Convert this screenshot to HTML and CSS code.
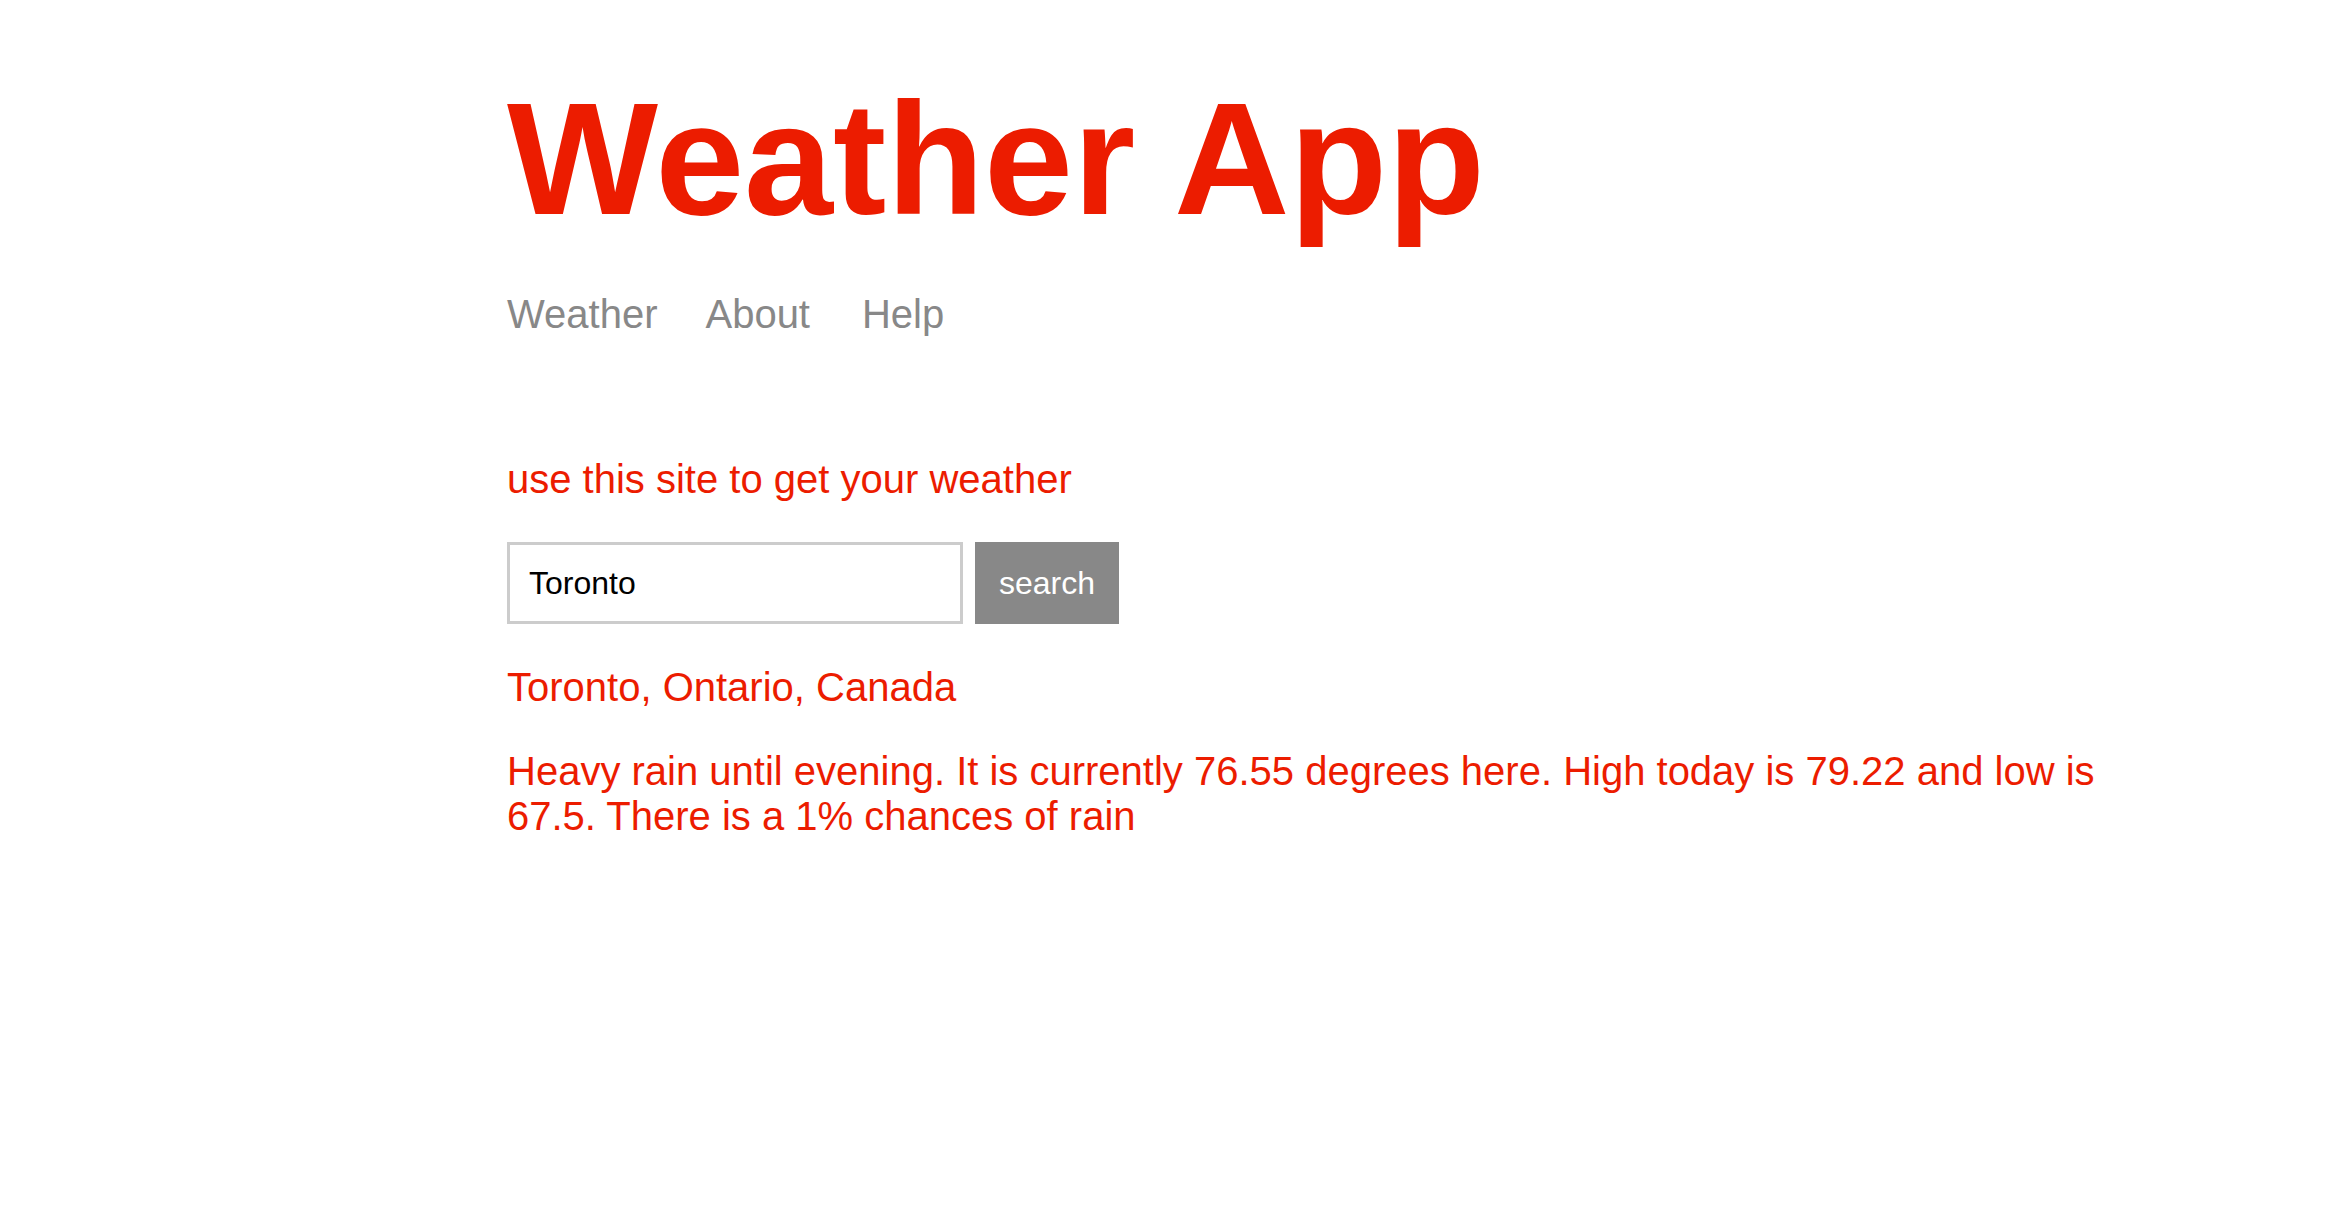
FILE: index.html
```html
<!DOCTYPE html>
<html lang="en">
<head>
<meta charset="utf-8">
<title>Weather App</title>
<link rel="stylesheet" href="styles.css">
</head>
<body>
<div class="page">
  <header class="header">
    <h1 class="title">Weather App</h1>
    <nav class="nav">
      <a class="nav-link" href="#">Weather</a>
      <a class="nav-link" href="#">About</a>
      <a class="nav-link nav-link-last" href="#">Help</a>
    </nav>
  </header>
  <main class="main">
    <p class="intro">use this site to get your weather</p>
    <form class="search-form">
      <input class="search-input" type="text" value="Toronto">
      <button class="search-button" type="button">search</button>
    </form>
    <p class="location">Toronto, Ontario, Canada</p>
    <p class="forecast">Heavy rain until evening. It is currently 76.55 degrees here. High today is 79.22 and low is 67.5. There is a 1% chances of rain</p>
  </main>
</div>
</body>
</html>
```
FILE: styles.css
```css
html, body {
  margin: 0;
  padding: 0;
  background: #ffffff;
}

body {
  font-family: "Liberation Sans", Arial, sans-serif;
  color: #ec1c00;
}

.page {
  width: 1625px;
  margin-left: 507px;
  padding-top: 67px;
}

.title {
  margin: 0;
  font-size: 160px;
  font-weight: bold;
  line-height: normal;
  color: #ec1c00;
}

.nav {
  display: flex;
  gap: 48px;
  margin-top: 40px;
}

.nav-link {
  font-size: 40px;
  line-height: 46px;
  color: #888888;
  text-decoration: none;
}

.nav-link-last {
  margin-left: 4px;
}

.main {
  margin-top: 119px;
}

.intro,
.location,
.forecast {
  margin: 0;
  font-size: 40px;
  line-height: 46px;
}

.search-form {
  display: flex;
  gap: 12px;
  margin: 40px 0 40px;
}

.search-input {
  box-sizing: border-box;
  width: 456px;
  height: 82px;
  padding: 0 19px;
  border: 3px solid #cccccc;
  font-family: "Liberation Sans", Arial, sans-serif;
  font-size: 32px;
  color: #000000;
  outline: none;
}

.search-button {
  box-sizing: border-box;
  height: 82px;
  padding: 0 24px;
  border: none;
  background: #888888;
  color: #ffffff;
  font-family: "Liberation Sans", Arial, sans-serif;
  font-size: 32px;
  cursor: pointer;
}

.forecast {
  margin-top: 39px;
  line-height: 45px;
}
```
